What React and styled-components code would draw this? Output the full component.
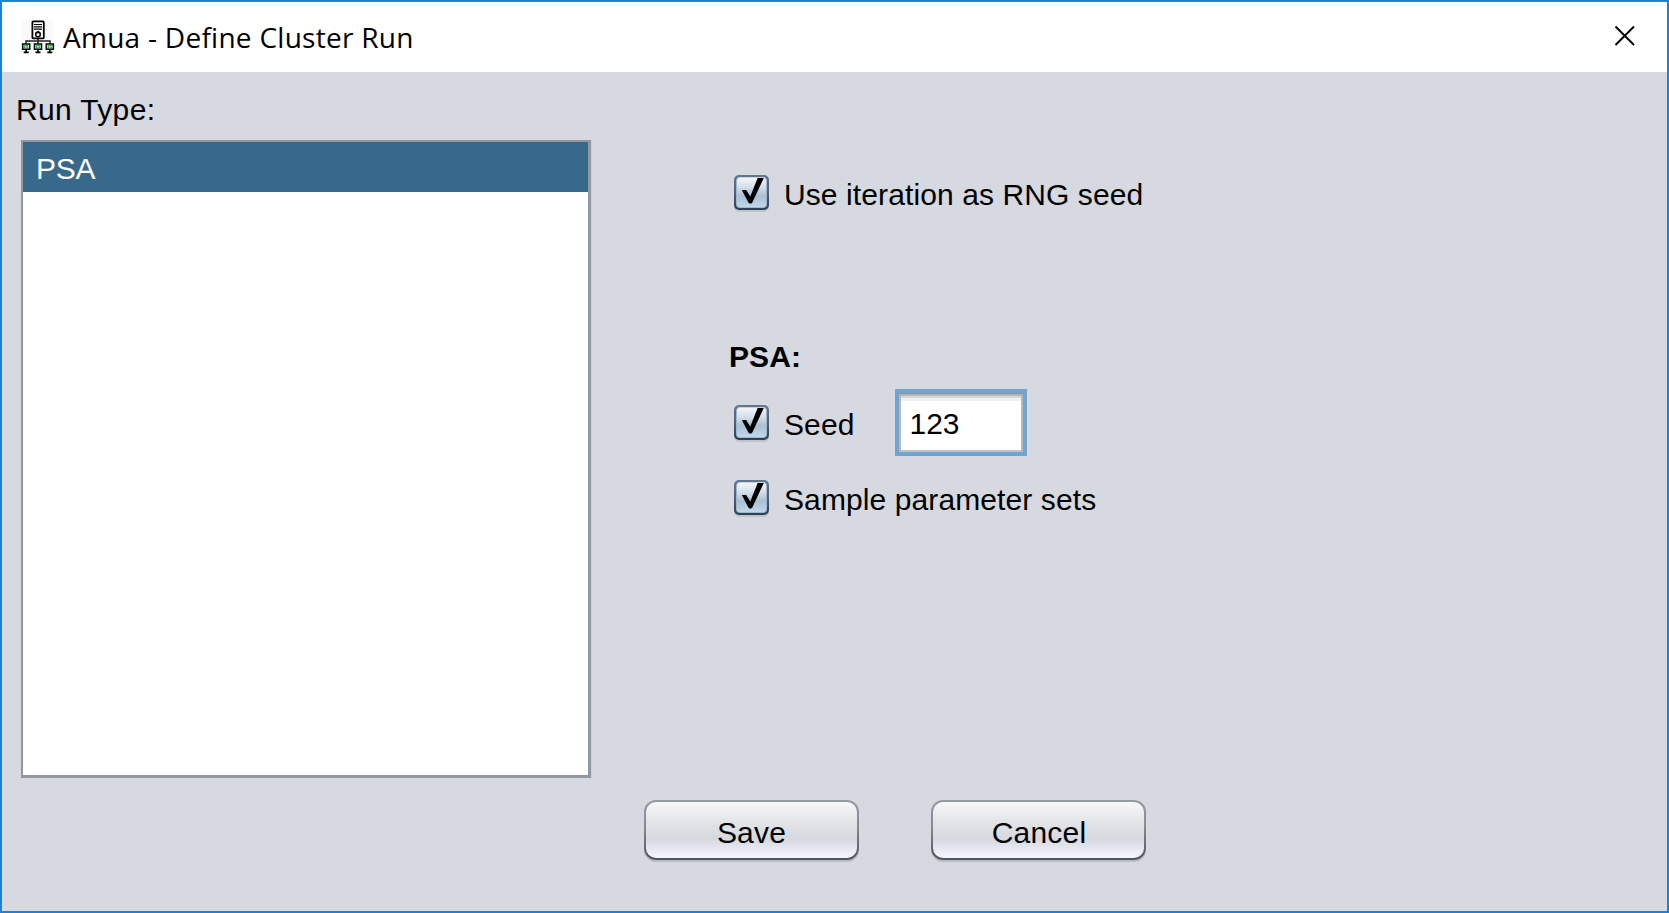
import React from "react";
import styled, { createGlobalStyle } from "styled-components";

const GlobalStyle = createGlobalStyle`
  * { box-sizing: border-box; }
  html, body { margin: 0; padding: 0; overflow: hidden; }
`;

const Dialog = styled.div`
  display: flex;
  flex-direction: column;
  width: 1669px;
  height: 913px;
  border: 2px solid #1a83d9;
  background: #d6d9df;
  color: #000;
  font-family: "Liberation Sans", Arial, sans-serif;
  font-size: 30px;
  line-height: 34px;
  letter-spacing: 0.1px;
  white-space: nowrap;
`;

const TitleBar = styled.header`
  display: flex;
  align-items: center;
  flex: none;
  height: 70px;
  padding: 0 31px 0 19px;
  background: #fff;
`;

const Title = styled.h1`
  flex: 1;
  margin: 0 0 0 8px;
  font: 400 28px/38px "Open Sans", "Noto Sans", sans-serif;
  letter-spacing: 0.27px;
`;

const CloseButton = styled.button`
  display: flex;
  width: 22px;
  height: 22px;
  margin-bottom: 2px;
  padding: 0;
  border: 0;
  background: none;
`;

const Content = styled.main`
  display: flex;
  height: 706px;
  padding: 0 0 0 14px;
  flex: none;
`;

const RunTypes = styled.section`
  width: 575px;
  padding-top: 21px;
`;

const ListLabel = styled.div`
  height: 47px;
  letter-spacing: 0.35px;
`;

const ListBox = styled.ul`
  width: 570px;
  height: 638px;
  margin: 0 0 0 5px;
  padding: 0;
  list-style: none;
  background: #fff;
  border: 2px solid #9297a1;
  border-right: 3px solid #9297a1;
  border-bottom: 3px solid #9297a1;
  box-shadow: 1px 0 0 #cdd0d6;
`;

const ListItem = styled.li`
  height: 50px;
  padding: 10px 0 0 13px;
  color: #fff;
  background: #39698a;
  letter-spacing: -0.3px;
`;

const Options = styled.section`
  display: flex;
  flex-direction: column;
  padding: 103px 0 0 141px;
`;

const OptionRow = styled.div`
  display: flex;
  align-items: center;
  height: 35px;
  margin-bottom: ${(p) => p.$below || 0}px;
`;

const OptionLabel = styled.label`
  margin-left: 15px;
  padding-top: 4px;
`;

const CheckBox = styled.span`
  display: flex;
  flex: none;
  width: 35px;
  height: 35px;
  margin-left: 2px;
  padding: 2px;
  border-radius: 5px;
  background: linear-gradient(#62788c, #4b647a 50%, #293f53);
  box-shadow: 0 2px 0 #bfc3ca;
`;

const CheckFace = styled.span`
  display: flex;
  width: 31px;
  height: 31px;
  border-radius: 4px;
  border: 1px solid #9fb5c9;
  border-top-color: #c9d3dc;
  background: linear-gradient(#f3f6f9, #d0dce6 35%, #a9bfd2 62%, #c0d6eb);
`;

const GroupHeading = styled.h2`
  margin: 0 0 31px -3px;
  font-size: 30px;
  line-height: 34px;
  font-weight: 700;
`;

const SeedField = styled.input`
  width: 132px;
  height: 67px;
  margin-left: 41px;
  padding: 3px 0 0 10px;
  border: 4px solid #73a4d1;
  outline: 0;
  background: #fff;
  box-shadow:
    inset 0 1px 0 #8d949d,
    inset 0 3px 0 #b5b5b6,
    inset 2px 0 0 #b7b9bc,
    inset -2px 0 0 #b7b9bc,
    inset 0 -2px 0 #c0c1c4,
    inset 0 5px 0 #d8d8d8,
    inset 0 8px 0 #f0f0f0;
  font: inherit;
  color: #000;
`;

const Actions = styled.footer`
  display: flex;
  gap: 72px;
  padding: 22px 0 0 642px;
`;

const PushButton = styled.button`
  width: 215px;
  height: 60px;
  padding: 5px 0 0 ${(p) => p.$shift || 0}px;
  border: 2px solid transparent;
  border-radius: 12px;
  background:
    linear-gradient(#f7f8fa, #e4e5e8 33%, #d6d9df 66%, #f5f7fe) padding-box,
    linear-gradient(#959ba2, #858a91 45%, #50545b) border-box;
  box-shadow: 0 2px 0 #b9bcc2;
  font: inherit;
  letter-spacing: 0.2px;
  color: #000;
`;

function ClusterIcon() {
  return (
    <svg width="34" height="34" viewBox="0 0 34 34" fill="none">
      <path d="M1 1H33V33H1Z" fill="#fafafa" />
      <path d="M17 18V29M5 24V21H29V24" stroke="#222" strokeWidth="1.5" />
      <rect x="11.4" y="1.4" width="11.4" height="17" rx="1" fill="#fff" stroke="#000" strokeWidth="1.8" />
      <path d="M13 4.5H21M13 6.8H21M13 9.1H21" stroke="#000" strokeWidth="1.2" />
      <circle cx="17" cy="14.4" r="2.3" stroke="#000" strokeWidth="1.5" />
      <path d="M17 11V13.5" stroke="#000" strokeWidth="1.4" />
      {[5.2, 17, 28.8].map((x) => (
        <g key={x} transform={`translate(${x} 23)`}>
          <rect x="-3.5" y="1" width="7" height="5.2" fill="#e9faea" stroke="#111" strokeWidth="1.6" />
          <path d="M1.5 2.3H-1.5V5H1.5V3.7M0 3.7L2 2.2" stroke="#19a82a" strokeWidth="1" />
          <path d="M0 6.5V9M-2.5 9.4H2.5" stroke="#000" strokeWidth="1.6" />
        </g>
      ))}
    </svg>
  );
}

function Checked() {
  return (
    <CheckBox role="checkbox" aria-checked="true">
      <CheckFace>
        <svg width="29" height="29" viewBox="0 0 29 29">
          <path d="M4.8 12H9.2L13.3 18.6L20.6 0H26.8L15.3 24.4L14.3 25.4H12.4L11.4 24.4Z" fill="#000" />
        </svg>
      </CheckFace>
    </CheckBox>
  );
}

export default function App() {
  return (
    <>
      <GlobalStyle />
      <Dialog>
        <TitleBar>
          <ClusterIcon />
          <Title>Amua - Define Cluster Run</Title>
          <CloseButton aria-label="Close">
            <svg width="22" height="22" viewBox="0 0 22 22">
              <path d="M1.5 1.5L20 20M20 1.5L1.5 20" stroke="#000" strokeWidth="1.9" />
            </svg>
          </CloseButton>
        </TitleBar>
        <Content>
          <RunTypes>
            <ListLabel>Run Type:</ListLabel>
            <ListBox>
              <ListItem>PSA</ListItem>
            </ListBox>
          </RunTypes>
          <Options>
            <OptionRow $below={130}>
              <Checked />
              <OptionLabel>Use iteration as RNG seed</OptionLabel>
            </OptionRow>
            <GroupHeading>PSA:</GroupHeading>
            <OptionRow $below={40}>
              <Checked />
              <OptionLabel>Seed</OptionLabel>
              <SeedField defaultValue="123" aria-label="Seed value" />
            </OptionRow>
            <OptionRow>
              <Checked />
              <OptionLabel>Sample parameter sets</OptionLabel>
            </OptionRow>
          </Options>
        </Content>
        <Actions>
          <PushButton>Save</PushButton>
          <PushButton $shift={1}>Cancel</PushButton>
        </Actions>
      </Dialog>
    </>
  );
}
